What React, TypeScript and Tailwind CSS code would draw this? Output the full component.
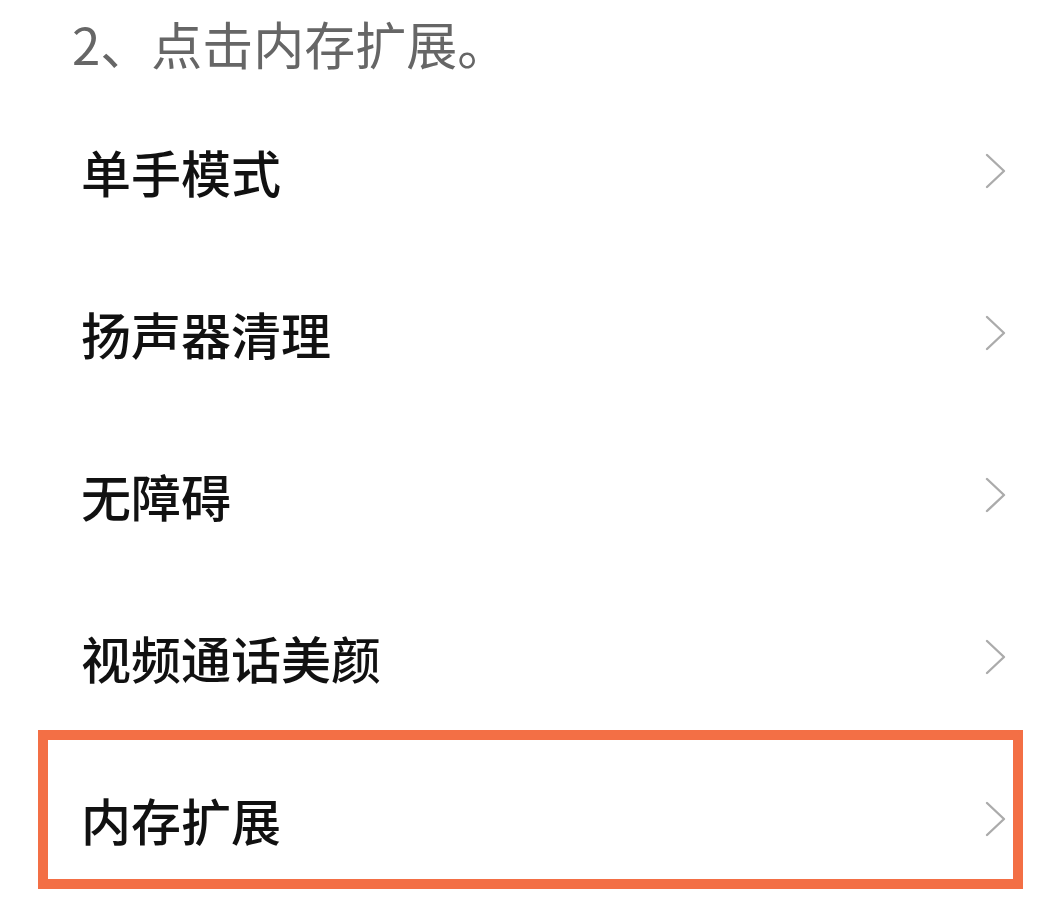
import React from "react";

const items = ["单手模式", "扬声器清理", "无障碍", "视频通话美颜", "内存扩展"];

function Chevron() {
  return (
    <svg width="24" height="36" viewBox="0 0 24 36" fill="none">
      <path d="M3 2 L20 18 L3 34" stroke="#ababab" strokeWidth="2.4" strokeLinecap="round" strokeLinejoin="round" />
    </svg>
  );
}

export default function App() {
  return (
    <div
      className="relative w-[1040px] h-[911px] bg-white overflow-hidden"
      style={{ fontFamily: '"Noto Sans CJK SC", "Noto Sans", sans-serif' }}
    >
      <div className="pl-[72px] pt-[18px] text-[51px] leading-[51px] text-[#666666]">
        2、点击内存扩展。
      </div>
      <div className="mt-[21px] flex flex-col">
        {items.map((t) => (
          <div key={t} className="h-[162px] flex items-center justify-between pl-[81px] pr-[32px]">
            <span className="text-[50px] leading-[50px] font-medium text-[#111111]">{t}</span>
            <Chevron />
          </div>
        ))}
      </div>
      <div className="absolute left-[38px] top-[730px] w-[985px] h-[159px] border-[10px] border-[#f36f45]" />
    </div>
  );
}
